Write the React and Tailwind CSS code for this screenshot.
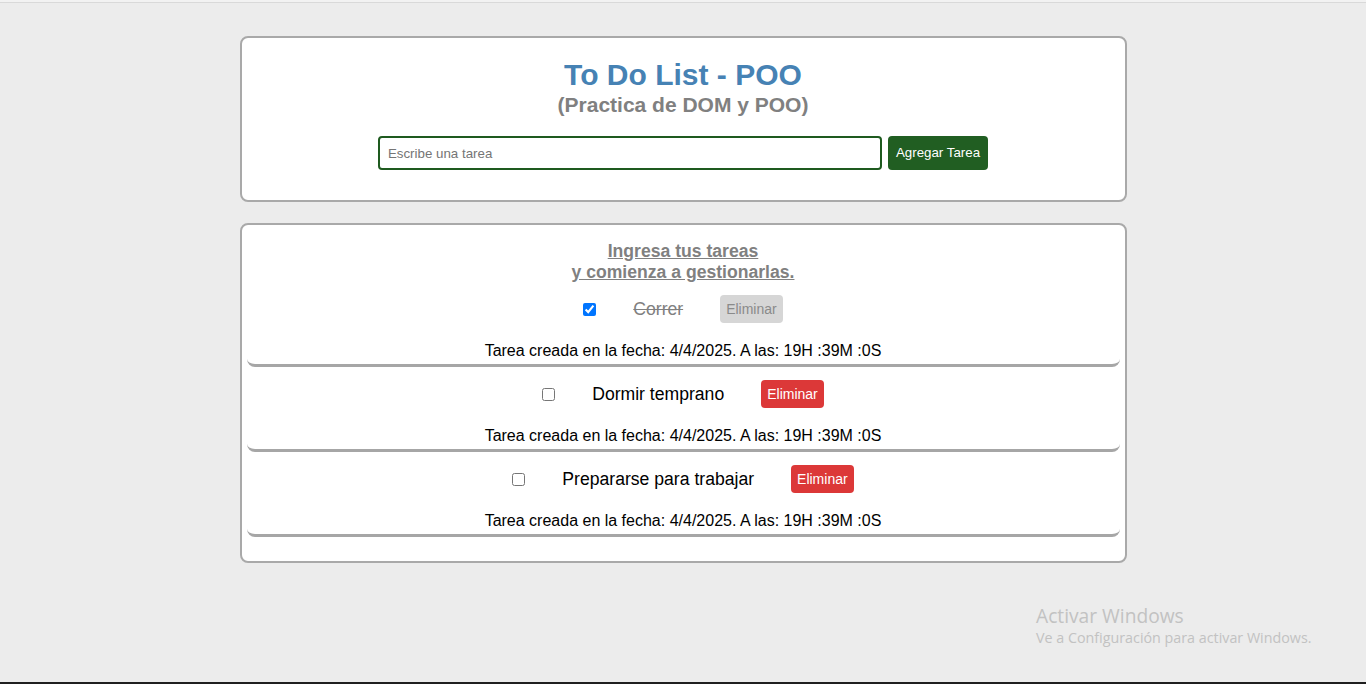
import React from "react";

const tasks = [
  { text: "Correr", done: true },
  { text: "Dormir temprano", done: false },
  { text: "Prepararse para trabajar", done: false },
];

function Task({ text, done }) {
  return (
    <div className="pt-[13px] pb-[4px] border-b-[3px] border-[#a6a6a6] rounded-lg">
      <div className="flex items-center justify-center gap-[37px] h-[28px]">
        <input
          type="checkbox"
          defaultChecked={done}
          className="w-[13px] h-[13px] m-0"
        />
        <span
          className={
            done
              ? "text-[17.6px] leading-[20px] text-[#808080] line-through"
              : "text-[17.6px] leading-[20px] text-black"
          }
        >
          {text}
        </span>
        <button
          className={
            done
              ? "h-[28px] px-[6px] rounded-[4px] bg-[#d6d6d6] text-[#8a8a8a] text-[14px]"
              : "h-[28px] px-[6px] rounded-[4px] bg-[#dc3838] text-white text-[14px]"
          }
        >
          Eliminar
        </button>
      </div>
      <p className="mt-[19px] text-[16px] leading-[18px] text-black text-center">
        Tarea creada en la fecha: 4/4/2025. A las: 19H :39M :0S
      </p>
    </div>
  );
}

export default function App() {
  return (
    <div
      className="relative min-h-[684px] flex flex-col bg-[#ececec]"
      style={{ fontFamily: '"Liberation Sans", Arial, sans-serif' }}
    >
      <div className="h-[2px] bg-[#f2f2f2]" />
      <div className="h-[1px] bg-[#d9d9d9]" />
      <div className="pt-[33px] flex flex-col items-center gap-[21px]">
        <div className="w-[887px] bg-white border-2 border-[#a9a9a9] rounded-lg pt-[20px] pb-[30px] flex flex-col items-center">
          <h1 className="text-[30px] leading-[34px] font-bold text-[#4682b4]">
            To Do List - POO
          </h1>
          <h2 className="text-[21px] leading-[25px] font-bold text-[#808080]">
            (Practica de DOM y POO)
          </h2>
          <div className="mt-[19px] flex items-center gap-[6px]">
            <input
              type="text"
              placeholder="Escribe una tarea"
              className="w-[504px] h-[34px] border-2 border-[#1e5a1f] rounded-[4px] px-[8px] text-[13.33px] placeholder:text-[#757575] outline-none"
            />
            <button className="h-[34px] px-[8px] rounded-[4px] bg-[#215e22] text-white text-[13.33px]">
              Agregar Tarea
            </button>
          </div>
        </div>

        <div className="w-[887px] bg-white border-2 border-[#a9a9a9] rounded-lg pt-[16px] pb-[24px] px-[5px]">
          <h3 className="mb-[-1px] text-center text-[17.6px] leading-[21px] font-bold text-[#808080] underline">
            Ingresa tus tareas
            <br />y comienza a gestionarlas.
          </h3>
          {tasks.map((t) => (
            <Task key={t.text} {...t} />
          ))}
        </div>
      </div>
      <div className="flex-1" />
      <div className="h-[2px] bg-[#1f1f1f]" />

      <div
        className="absolute left-[1036px] top-[603px] text-[#c2c2c2]"
        style={{ fontFamily: '"Open Sans", "Noto Sans", sans-serif' }}
      >
        <div className="text-[19.2px] leading-[25px]">Activar Windows</div>
        <div className="text-[14.3px] leading-[20px]">
          Ve a Configuración para activar Windows.
        </div>
      </div>
    </div>
  );
}
